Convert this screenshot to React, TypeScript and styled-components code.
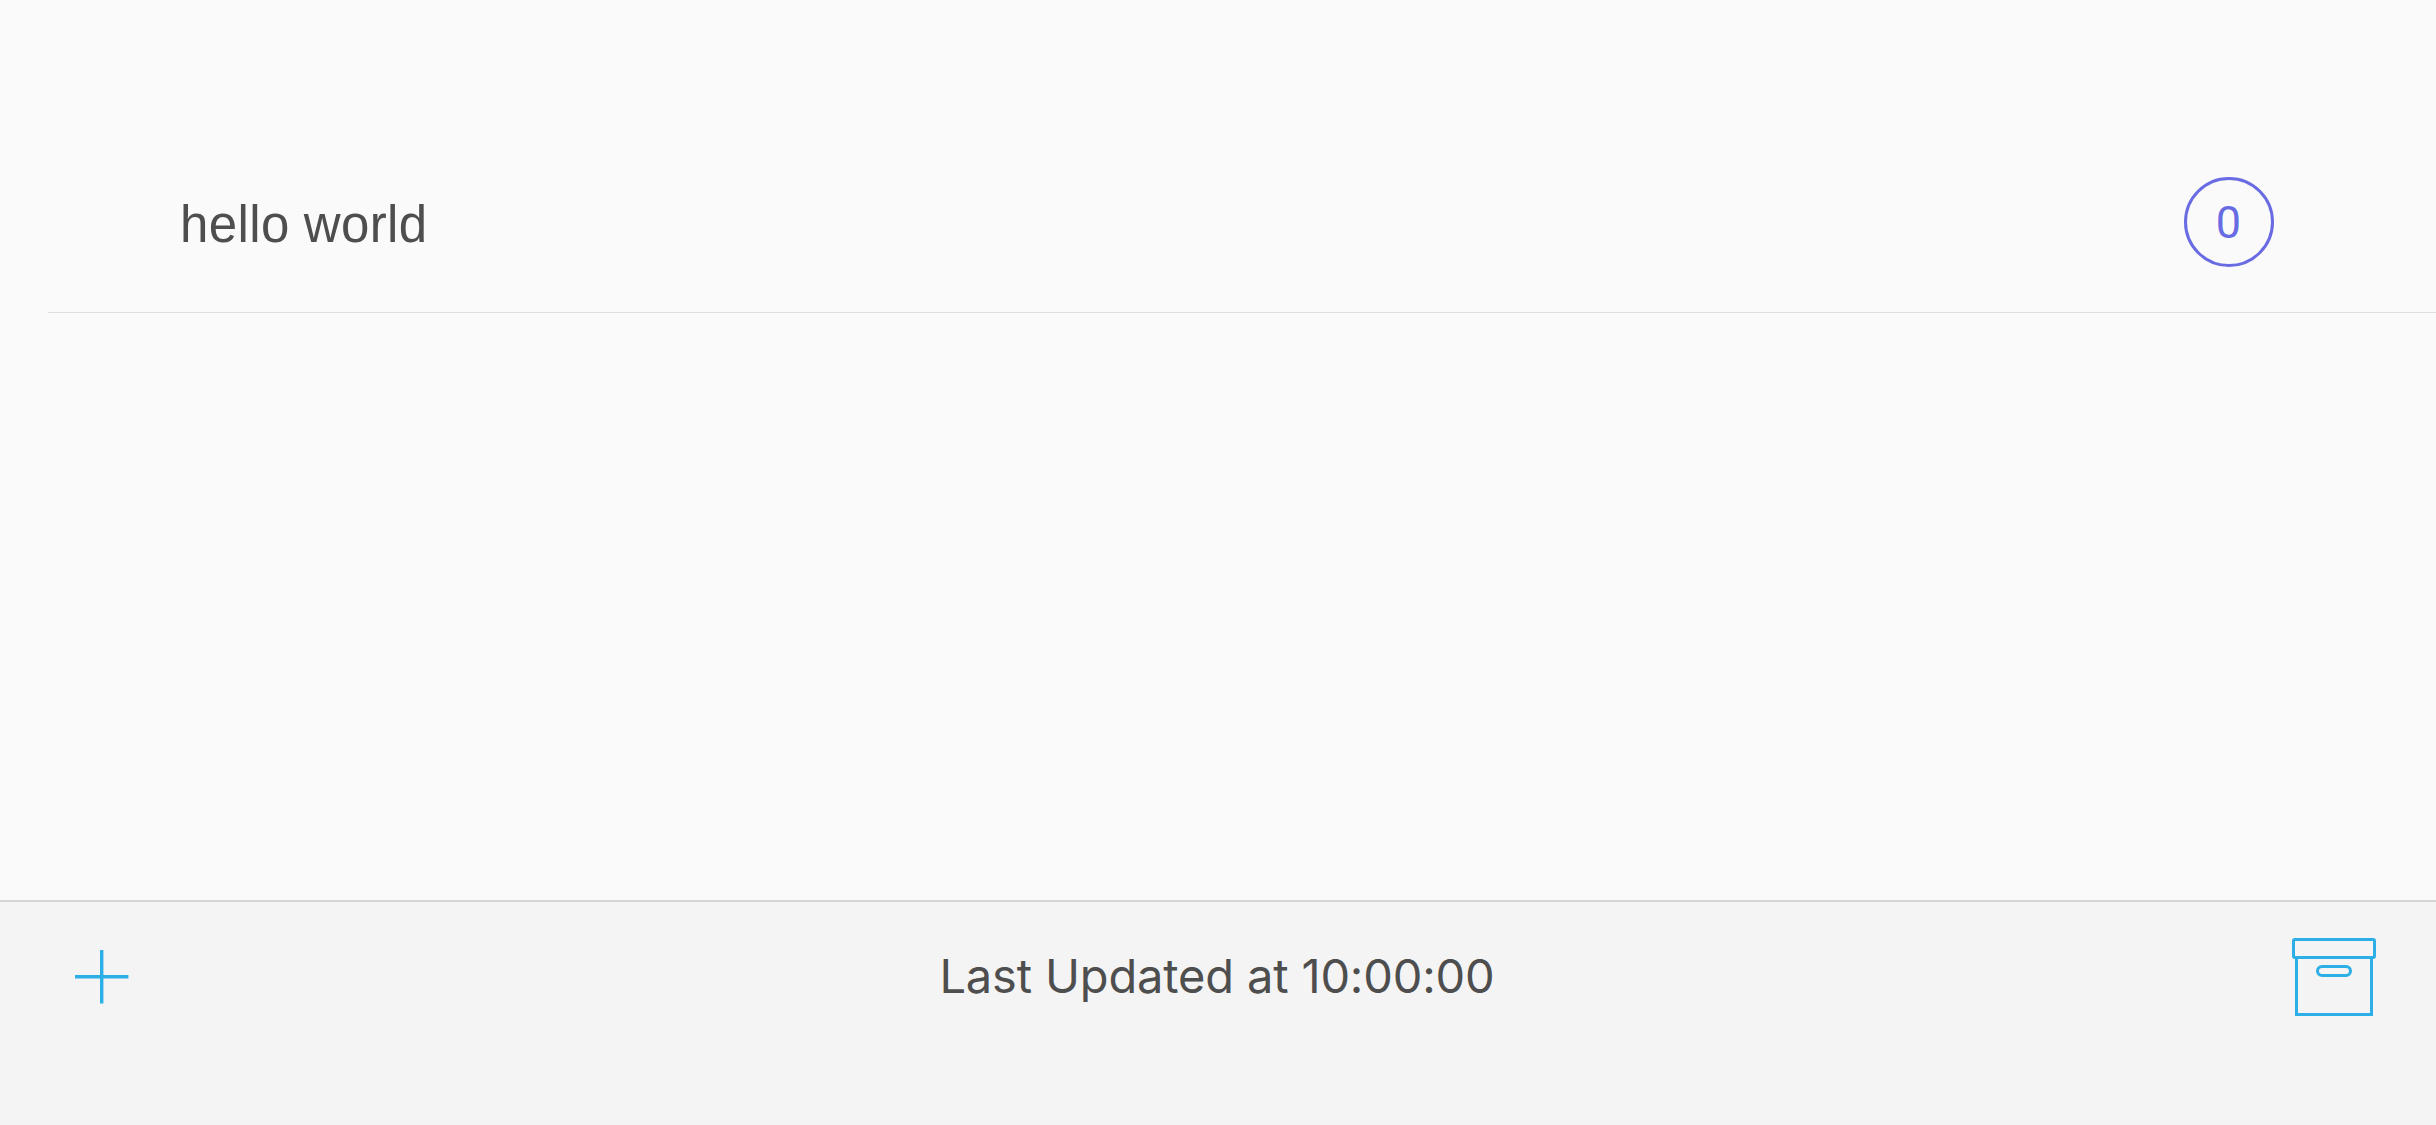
import React from "react";
import styled, { createGlobalStyle } from "styled-components";

const GlobalStyle = createGlobalStyle`
  * { box-sizing: border-box; }
  body { margin: 0; background: #fafafa; }
`;

const Screen = styled.div`
  height: 1125px;
  display: flex;
  flex-direction: column;
  background: #fafafa;
  color: #4e4e4e;
`;

const List = styled.main`
  flex: 1;
  padding: 133px 0 0 48px;
`;

const Row = styled.div`
  height: 180px;
  display: flex;
  align-items: center;
  justify-content: space-between;
  padding: 0 162px 2px 132px;
  border-bottom: 1px solid #dedede;
`;

const Title = styled.span`
  font: 51px/60px "Liberation Sans", Arial, sans-serif;
  letter-spacing: 0.4px;
  word-spacing: -0.6px;
  padding-top: 6px;
`;

const Badge = styled.span`
  width: 90px;
  height: 90px;
  display: flex;
  align-items: center;
  justify-content: center;
  padding: 2px 1px 0 0;
  border: 3px solid #696be3;
  border-radius: 50%;
  color: #696be3;
  font: 45px/54px Roboto, sans-serif;
`;

const Toolbar = styled.footer`
  height: 225px;
  display: flex;
  align-items: flex-start;
  justify-content: space-between;
  padding: 34px 60px 0 75px;
  background: #f4f4f4;
  border-top: 2px solid #d4d4d4;
`;

const IconButton = styled.button<{ $offset: number }>`
  display: flex;
  width: 84px;
  padding: 0;
  margin-top: ${(p) => p.$offset}px;
  border: 0;
  background: none;
  color: #2caee6;
`;

const Status = styled.span`
  margin: 12px 17px 0 0;
  font: 47px/56px Inter, sans-serif;
  letter-spacing: -0.16px;
  white-space: nowrap;
`;

export default function App() {
  return (
    <Screen>
      <GlobalStyle />
      <List>
        <Row>
          <Title>hello world</Title>
          <Badge>0</Badge>
        </Row>
      </List>
      <Toolbar>
        <IconButton $offset={14} aria-label="Add">
          <svg width="54" height="54" viewBox="0 0 54 54" fill="currentColor">
            <path d="M25 0h3.4v25h25v3.4h-25v25H25v-25H0V25h25z" />
          </svg>
        </IconButton>
        <Status>Last Updated at 10:00:00</Status>
        <IconButton $offset={2} aria-label="Archive">
          <svg width="84" height="78" viewBox="0 0 84 78" fill="none" stroke="currentColor" strokeWidth="3">
            <rect x="1.5" y="1.5" width="81" height="18" rx="1.5" />
            <path d="M4.5 19.5v57h75v-57" />
            <rect x="25.5" y="28.5" width="33" height="9" rx="4.5" />
          </svg>
        </IconButton>
      </Toolbar>
    </Screen>
  );
}
